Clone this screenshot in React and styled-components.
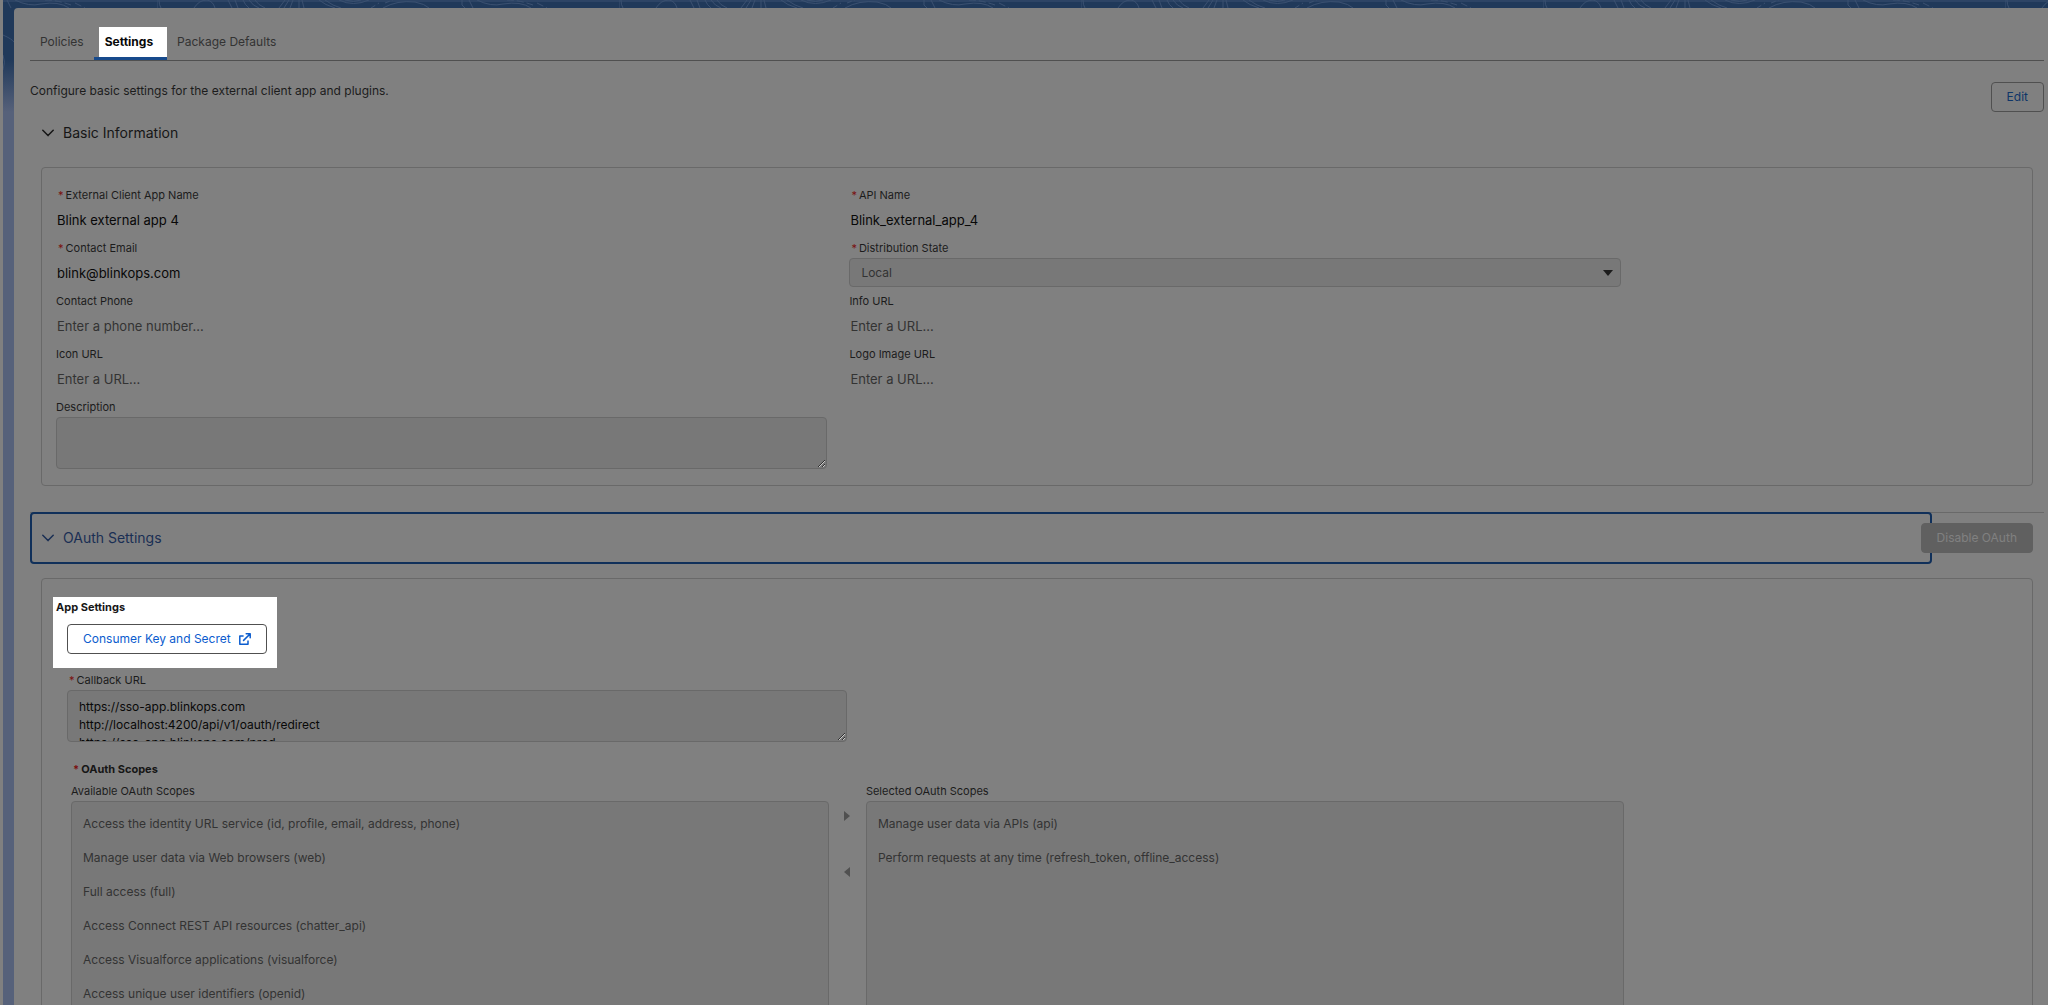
import React, { useId } from "react";
import styled, { createGlobalStyle, ThemeProvider } from "styled-components";

const theme = {
  surface: "#808080",
  field: "#787878",
  border: "#696969",
  line: "#505050",
  text: "#080808",
  label: "#1c1c1c",
  muted: "#333333",
  disabled: "#606060",
  disabledText: "#808080",
  link: "#0f3568",
  focus: "#10305a",
  required: "#7a1010",
  brand: "#0b5cce",
};

const GlobalStyle = createGlobalStyle`
  *, *::before, *::after {
    box-sizing: border-box;
  }
  body {
    margin: 0;
    font-family: Inter, "Liberation Sans", sans-serif;
    font-size: 12px;
    line-height: 18px;
    color: ${theme.text};
    background: ${theme.surface};
  }
  button, input, select, textarea {
    margin: 0;
    font: inherit;
  }
`;

const Shell = styled.div`
  position: relative;
  display: flex;
  height: 100vh;
  margin-left: 3px;
  padding: 8px 0 0 11px;
  overflow: hidden;
  background: linear-gradient(#20395a, #20395a 60px, #56617a 112px, #56617a);
`;

const Waves = styled.svg`
  position: absolute;
  top: 0;
  left: 0;
  width: 100%;
  height: 100px;
`;

const Panel = styled.main`
  position: relative;
  flex: 1;
  min-width: 0;
  padding: 19px 4px 0 16px;
  border-top-left-radius: 4px;
  background: ${props => props.theme.surface};
`;

const TabList = styled.div`
  display: flex;
  height: 34px;
  border-bottom: 1px solid ${props => props.theme.line};
`;

const Tab = styled.button`
  height: 33px;
  padding: 0 10px;
  border: 0;
  border-bottom: 3px solid transparent;
  color: ${props => props.theme.muted};
  background: none;
  ${props =>
    props.$active &&
    `
      padding: 0 14px 0 11px;
      color: #080808;
      font-weight: 700;
      border-bottom-color: #174a8c;
      background: linear-gradient(to right, transparent 5px, #ffffff 5px);
    `}
`;

const Intro = styled.div`
  display: flex;
  justify-content: space-between;
  align-items: flex-start;
  padding-top: 21px;
`;

const IntroText = styled.p`
  margin: 0;
  color: ${props => props.theme.label};
`;

const Button = styled.button`
  display: inline-flex;
  align-items: center;
  gap: 8px;
  height: 30px;
  padding: 0 15px;
  border: 1px solid ${props => props.theme.line};
  border-radius: 4px;
  font-size: 12px;
  white-space: nowrap;
  color: ${props => props.theme.link};
  background: transparent;
`;

const BrandButton = styled(Button)`
  color: ${props => props.theme.brand};
  background: #ffffff;
`;

const DisabledButton = styled(Button)`
  margin-left: -11px;
  border-color: ${props => props.theme.disabled};
  color: ${props => props.theme.disabledText};
  background: ${props => props.theme.disabled};
`;

const SectionHeader = styled.h2`
  display: flex;
  align-items: center;
  margin: 0;
  padding-right: 11px;
  font-weight: 400;
  ${props => props.$divided && `
    margin-top: 26px;
    background: linear-gradient(${theme.border}, ${theme.border}) top / 100% 1px no-repeat;
  `}
`;

const SectionToggle = styled.button`
  display: flex;
  flex: 1;
  align-items: center;
  gap: 9px;
  height: ${props => (props.$focused ? 52 : 41)}px;
  padding: 0 10px;
  border: 2px solid ${props => (props.$focused ? props.theme.focus : "transparent")};
  border-radius: 4px;
  font-size: 14px;
  color: ${props => (props.$focused ? "#1a2f54" : "#161616")};
  background: none;
`;

const Box = styled.section`
  margin: ${props => props.$top}px 11px 0 11px;
  padding: ${props => props.$pad};
  border: 1px solid ${props => props.theme.border};
  border-radius: 4px;
`;

const FieldGrid = styled.div`
  display: grid;
  grid-template-columns: 1fr 1fr;
  gap: 6px 22px;
  width: 80%;
`;

const FieldRoot = styled.div`
  display: flex;
  flex-direction: column;
  gap: 2px;
`;

const Label = styled.label`
  font-size: 11px;
  line-height: 16px;
  color: ${props => props.theme.label};
`;

const Star = styled.abbr`
  margin: 0 2px;
  color: ${props => props.theme.required};
`;

const Input = styled.input`
  width: 100%;
  height: 29px;
  padding: 0 1px;
  border: 0;
  font-size: 13px;
  color: ${props => props.theme.text};
  background: none;

  &::placeholder {
    color: ${props => props.theme.muted};
    opacity: 1;
  }
`;

const SelectWrap = styled.div`
  position: relative;
  color: ${props => props.theme.label};

  svg {
    position: absolute;
    top: 12px;
    right: 8px;
  }
`;

const Select = styled.select`
  display: block;
  width: 100%;
  height: 29px;
  padding: 0 11px;
  border: 1px solid ${props => props.theme.border};
  border-radius: 4px;
  appearance: none;
  opacity: 1;
  color: ${props => props.theme.muted};
  background: ${props => props.theme.field};
`;

const TextArea = styled.textarea`
  display: block;
  width: 100%;
  height: 52px;
  padding: 7px 11px;
  border: 1px solid ${props => props.theme.border};
  border-radius: 4px;
  overflow: hidden;
  resize: vertical;
  line-height: 18px;
  color: ${props => props.theme.text};
  background: ${props => props.theme.field};
`;

const Spotlight = styled.div`
  width: 224px;
  padding: 2px 11px 14px 3px;
  background: #ffffff;
`;

const SpotlightTitle = styled.h3`
  margin: 0 0 9px;
  font-size: 11px;
  line-height: 16px;
  color: #161616;
`;

const SpotlightBody = styled.div`
  display: flex;
  padding-left: 11px;
`;

const CallbackField = styled(FieldRoot)`
  width: 40%;
  margin: 4px 0 0 14px;
`;

const Scopes = styled.fieldset`
  width: 80%;
  margin: 19px 0 0 18px;
  padding: 0 8px 0 0;
  border: 0;
`;

const ScopesTitle = styled.legend`
  padding: 0;
  font-size: 11px;
  font-weight: 700;
  line-height: 16px;
  color: #161616;
`;

const DualList = styled.div`
  display: grid;
  grid-template-columns: 1fr 37px 1fr;
  padding-top: 6px;
`;

const ListTitle = styled.div`
  margin-bottom: 2px;
  font-size: 11px;
  line-height: 16px;
  color: ${props => props.theme.label};
`;

const ListBox = styled.ul`
  height: 272px;
  margin: 0;
  padding: 5px 0;
  border: 1px solid ${props => props.theme.border};
  border-radius: 4px;
  overflow: hidden;
  list-style: none;
  background: ${props => props.theme.field};
`;

const ListItem = styled.li`
  padding: 8px 11px;
  color: ${props => props.theme.muted};
`;

const MoveButtons = styled.div`
  display: flex;
  flex-direction: column;
  align-items: center;
  gap: 26px;
  padding-top: 18px;
`;

const MoveButton = styled.button`
  display: flex;
  align-items: center;
  justify-content: center;
  width: 30px;
  height: 30px;
  padding: 0;
  border: 0;
  color: ${props => props.theme.line};
  background: none;
`;

const ChevronDown = () => (
  <svg width="12" height="8" viewBox="0 0 12 8" fill="none" aria-hidden="true">
    <path d="M0.8 1.2L6 6.6L11.2 1.2" stroke="currentColor" strokeWidth="1.5" strokeLinecap="round" strokeLinejoin="round" />
  </svg>
);

const ExternalLink = () => (
  <svg width="12" height="12" viewBox="0 0 12 12" fill="none" stroke="currentColor" strokeWidth="1.5" aria-hidden="true">
    <path d="M4.6 3H0.8V11.2H9V7.4" strokeLinejoin="round" />
    <path d="M7.2 0.8H11.2V4.8M11 1L4.6 7.4" strokeLinecap="round" strokeLinejoin="round" />
  </svg>
);

const Triangle = ({ points, width, height }) => (
  <svg width={width} height={height} aria-hidden="true">
    <polygon points={points} fill="currentColor" />
  </svg>
);

// contour lines behind the header, tiled along the top edge
const Contours = () => (
  <Waves aria-hidden="true">
    <defs>
      <pattern id="contours" x="154" width="462" height="100" patternUnits="userSpaceOnUse">
        <g fill="none" stroke="#3a5070" strokeWidth="1">
          <path d="M0 0V8M2 0Q2 5 4 8M37 8Q42 0 50 0Q56 1 58 8" />
          <path d="M71 0L75 8M78 0L81 8M86 0Q88 5 92 8M92 0Q96 6 102 8M98 0Q101 5 108 8" />
          <path d="M122 8L128 0M127 8L132 0M133 8L136 0M142 8V0M147 8L145 0" />
          <path d="M162 0Q168 5 178 8M168 0Q176 6 184 8M182 0Q196 7 212 0M188 0Q197 3 204 0" />
          <path d="M226 8Q240 0 258 2Q268 4 272 8" />
          <path d="M214 8L222 3M228 3L236 0" strokeDasharray="5 3" />
          <path d="M305 0V5L308 8M312 0L316 8M320 0Q334 7 346 4Q364 1 374 8" />
          <path d="M350 0Q362 0 376 5M380 3L390 8" strokeDasharray="7 3" />
        </g>
      </pattern>
    </defs>
    <rect width="100%" height="8" fill="url(#contours)" />
    <path d="M0 35Q9 39 11 42M0 55Q3 62 0 70M0 1H3000" fill="none" stroke="#3a5070" />
  </Waves>
);

const Required = () => <Star aria-hidden="true">*</Star>;

const Field = ({ label, required, as: Root = FieldRoot, children }) => {
  const id = useId();
  return (
    <Root>
      <Label htmlFor={id}>
        {required && <Required />}
        {label}
      </Label>
      {children(id)}
    </Root>
  );
};

const TextField = ({ value, placeholder, ...rest }) => (
  <Field {...rest}>
    {id => <Input id={id} defaultValue={value} placeholder={placeholder} readOnly />}
  </Field>
);

const ScopeList = ({ title, items }) => (
  <div>
    <ListTitle>{title}</ListTitle>
    <ListBox role="listbox" aria-label={title} aria-disabled="true">
      {items.map(item => (
        <ListItem key={item} role="option" aria-selected="false">
          {item}
        </ListItem>
      ))}
    </ListBox>
  </div>
);

const tabs = ["Policies", "Settings", "Package Defaults"];

const callbackUrls = [
  "https://sso-app.blinkops.com",
  "http://localhost:4200/api/v1/oauth/redirect",
  "https://sso-app.blinkops.com/prod",
].join("\n");

const availableScopes = [
  "Access the identity URL service (id, profile, email, address, phone)",
  "Manage user data via Web browsers (web)",
  "Full access (full)",
  "Access Connect REST API resources (chatter_api)",
  "Access Visualforce applications (visualforce)",
  "Access unique user identifiers (openid)",
];

const selectedScopes = [
  "Manage user data via APIs (api)",
  "Perform requests at any time (refresh_token, offline_access)",
];

const BasicInformation = () => (
  <>
    <SectionHeader>
      <SectionToggle aria-expanded="true">
        <ChevronDown />
        Basic Information
      </SectionToggle>
    </SectionHeader>
    <Box $top={14} $pad="19px 20px 16px 14px">
      <FieldGrid>
        <TextField label="External Client App Name" required value="Blink external app 4" />
        <TextField label="API Name" required value="Blink_external_app_4" />
        <TextField label="Contact Email" required value="blink@blinkops.com" />
        <Field label="Distribution State" required>
          {id => (
            <SelectWrap>
              <Select id={id} disabled>
                <option>Local</option>
              </Select>
              <Triangle points="0,0 10,0 5,6" width="10" height="6" />
            </SelectWrap>
          )}
        </Field>
        <TextField label="Contact Phone" placeholder="Enter a phone number..." />
        <TextField label="Info URL" placeholder="Enter a URL..." />
        <TextField label="Icon URL" placeholder="Enter a URL..." />
        <TextField label="Logo Image URL" placeholder="Enter a URL..." />
        <Field label="Description">{id => <TextArea id={id} readOnly />}</Field>
      </FieldGrid>
    </Box>
  </>
);

const OAuthSettings = () => (
  <>
    <SectionHeader $divided>
      <SectionToggle $focused aria-expanded="true">
        <ChevronDown />
        OAuth Settings
      </SectionToggle>
      <DisabledButton disabled>Disable OAuth</DisabledButton>
    </SectionHeader>
    <Box $top={14} $pad="18px 28px 15px 11px">
      <Spotlight>
        <SpotlightTitle>App Settings</SpotlightTitle>
        <SpotlightBody>
          <BrandButton>
            Consumer Key and Secret
            <ExternalLink />
          </BrandButton>
        </SpotlightBody>
      </Spotlight>
      <Field label="Callback URL" required as={CallbackField}>
        {id => <TextArea id={id} defaultValue={callbackUrls} readOnly />}
      </Field>
      <Scopes>
        <ScopesTitle>
          <Required />
          OAuth Scopes
        </ScopesTitle>
        <DualList>
          <ScopeList title="Available OAuth Scopes" items={availableScopes} />
          <MoveButtons>
            <MoveButton disabled aria-label="Move to Selected">
              <Triangle points="0,0 6,5 0,10" width="6" height="10" />
            </MoveButton>
            <MoveButton disabled aria-label="Move to Available">
              <Triangle points="6,0 0,5 6,10" width="6" height="10" />
            </MoveButton>
          </MoveButtons>
          <ScopeList title="Selected OAuth Scopes" items={selectedScopes} />
        </DualList>
      </Scopes>
    </Box>
  </>
);

const App = () => (
  <ThemeProvider theme={theme}>
    <GlobalStyle />
    <Shell>
      <Contours />
      <Panel>
        <TabList role="tablist">
          {tabs.map(tab => (
            <Tab key={tab} role="tab" aria-selected={tab === "Settings"} $active={tab === "Settings"}>
              {tab}
            </Tab>
          ))}
        </TabList>
        <Intro>
          <IntroText>Configure basic settings for the external client app and plugins.</IntroText>
          <Button>Edit</Button>
        </Intro>
        <BasicInformation />
        <OAuthSettings />
      </Panel>
    </Shell>
  </ThemeProvider>
);

export default App;
